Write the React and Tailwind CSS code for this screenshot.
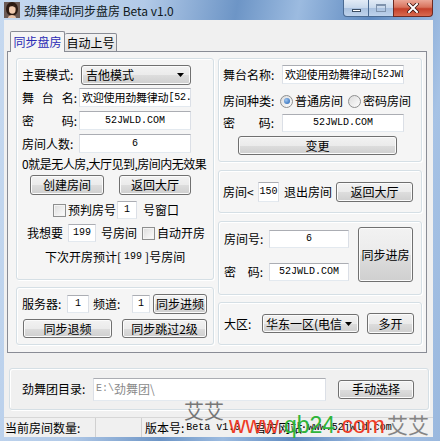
import React from "react";

const Btn = ({ className = "", children }) => (
  <div
    className={`flex shrink-0 items-center justify-center rounded-[3px] border border-[#707070] bg-[linear-gradient(to_bottom,#f2f2f2_0%,#ebebeb_50%,#dddddd_51%,#cfcfcf_100%)] shadow-[inset_0_0_0_1px_#fbfbfb] text-[#000] ${className}`}
  >
    {children}
  </div>
);

const Inp = ({ className = "", children }) => (
  <div
    className={`flex shrink-0 items-center overflow-hidden whitespace-nowrap border border-[#abadb3] border-x-[#dbdfe6] border-b-[#e3e9ef] bg-white ${className}`}
  >
    {children}
  </div>
);

const Mono = ({ children, className = "" }) => (
  <span className={`font-['Liberation_Mono',monospace] text-[10px] leading-none ${className}`}>{children}</span>
);

const Sel = ({ className = "", children }) => (
  <div
    className={`flex shrink-0 items-center rounded-[3px] border border-[#707070] bg-[linear-gradient(to_bottom,#f2f2f2_0%,#ebebeb_50%,#dddddd_51%,#cfcfcf_100%)] pr-[6px] shadow-[inset_0_0_0_1px_#fbfbfb] ${className}`}
  >
    <div className="min-w-0 flex-1 whitespace-nowrap text-left">{children}</div>
    <svg width="7" height="4" viewBox="0 0 7 4" className="shrink-0">
      <path d="M0 0H7L3.5 4Z" fill="#000" />
    </svg>
  </div>
);

const Check = ({ className = "" }) => (
  <div
    className={`h-[13px] w-[13px] shrink-0 border border-[#8e8f8f] bg-[linear-gradient(135deg,#dcdcdc,#fdfdfd)] shadow-[inset_0_0_0_1px_#f4f4f4] ${className}`}
  />
);

const Radio = ({ checked, className = "" }) => (
  <div
    className={`flex h-[13px] w-[13px] shrink-0 items-center justify-center rounded-full border border-[#8e8f8f] bg-[linear-gradient(135deg,#dcdcdc,#fdfdfd)] ${className}`}
  >
    {checked && (
      <div className="h-[6px] w-[6px] rounded-full bg-[radial-gradient(circle_at_35%_35%,#9cc4f0,#1f5fb0)]" />
    )}
  </div>
);

const Group = ({ className = "", children }) => (
  <div className={`shrink-0 rounded-[3px] border border-[#d5dfe5] shadow-[1px_1px_0_#fff,inset_1px_1px_0_#fff] ${className}`}>
    {children}
  </div>
);

export default function App() {
  return (
    <div className="relative flex h-[441px] w-[440px] flex-col overflow-hidden bg-[linear-gradient(100deg,#c6d9f0_0%,#b2cae8_28%,#6d95c6_46%,#9cbbe0_58%,#5f8ac0_72%,#a6c2e5_88%,#9ab8de_100%)] font-['Noto_Sans_CJK_SC',sans-serif] text-[12px] leading-none text-black">
      {/* Title bar */}
      <div className="relative flex h-[20px] shrink-0 items-start">
        <div className="ml-[4px] mt-[2px] h-[16px] w-[16px] shrink-0">
          <svg width="16" height="16" viewBox="0 0 16 16">
            <rect x="0" y="0" width="16" height="16" fill="#6b5a55" />
            <ellipse cx="8" cy="7" rx="6" ry="7" fill="#2c1a12" />
            <ellipse cx="8.3" cy="7.5" rx="3.3" ry="4.3" fill="#f1cbb0" />
            <path d="M4 16C4 12 12 12 12 16Z" fill="#e9c1a6" />
            <path d="M5 5C6 2 11 2 11.5 6C10 4 7 4 5 5Z" fill="#2c1a12" />
          </svg>
        </div>
        <div className="ml-[4px] mt-[5px] whitespace-nowrap text-[12px] text-[#101820]">劲舞律动同步盘房 Beta v1.0</div>
        <div className="ml-auto mr-[7px] flex h-[17px] items-stretch">
          <div className="flex w-[26px] items-center justify-center rounded-bl-[4px] border border-t-0 border-[#4a6a92] bg-[linear-gradient(to_bottom,#e2ebf6_0%,#c7d8ec_50%,#a9c1df_51%,#bfd3ec_100%)]">
            <div className="mt-[5px] h-[3px] w-[9px] border border-[#3b4d63] bg-white" />
          </div>
          <div className="flex w-[24px] items-center justify-center border-y border-t-0 border-[#4a6a92] bg-[linear-gradient(to_bottom,#e2ebf6_0%,#c7d8ec_50%,#a9c1df_51%,#bfd3ec_100%)]">
            <div className="h-[8px] w-[10px] border border-[#7f93ad] border-t-2" />
          </div>
          <div className="flex w-[40px] items-center justify-center rounded-br-[4px] border border-t-0 border-[#6e2a22] bg-[linear-gradient(to_bottom,#eba797_0%,#d8735d_45%,#c4402a_55%,#d96a4f_100%)]">
            <svg width="12" height="10" viewBox="0 0 12 10">
              <path d="M2 1L10 9M10 1L2 9" stroke="#3a1410" strokeWidth="3.6" strokeLinecap="square" />
              <path d="M2 1L10 9M10 1L2 9" stroke="#fff" strokeWidth="2" strokeLinecap="square" />
            </svg>
          </div>
        </div>
      </div>

      {/* Body */}
      <div className="flex h-[417px] shrink-0">
        <div className="w-[4px] shrink-0" />
        <div className="flex w-[429px] shrink-0 flex-col bg-[#f0f0f0]">
          {/* Tabs */}
          <div className="relative z-10 -mb-px mt-[11px] flex h-[21px] items-end pl-[6px]">
            <div className="flex h-[21px] w-[55px] items-center justify-center rounded-t-[2px] border border-b-0 border-[#898c95] bg-[#f5f5f5] pb-[1px] text-[#2b2bb4]">
              同步盘房
            </div>
            <div className="flex h-[19px] w-[52px] items-center justify-center rounded-t-[2px] border border-l-0 border-[#898c95] bg-[linear-gradient(to_bottom,#f2f2f2,#e3e3e3)]">
              自动上号
            </div>
          </div>

          {/* Tab panel */}
          <div className="ml-[3px] flex h-[302px] w-[420px] shrink-0 gap-[4px] border border-[#898c95] bg-[#f5f5f5] pl-[8px] pt-[6px]">
            {/* Left column */}
            <div className="flex w-[198px] shrink-0 flex-col">
              <Group className="flex h-[222px] flex-col pl-[5px]">
                <div className="mt-[6px] flex h-[20px] items-center">
                  <span className="w-[59px]">主要模式:</span>
                  <Sel className="h-[20px] w-[110px] pl-[4px]">吉他模式</Sel>
                </div>
                <div className="mt-[3px] flex h-[19px] items-center">
                  <span className="flex w-[57px] justify-between pr-[2px]"><span>舞</span><span>台</span><span>名:</span></span>
                  <Inp className="h-[19px] w-[112px] pl-[2px] text-[11px] tracking-[-0.2px]">欢迎使用劲舞律动<Mono>[52.</Mono></Inp>
                </div>
                <div className="mt-[4px] flex h-[19px] items-center">
                  <span className="flex w-[57px] justify-between pr-[2px]"><span>密</span><span>码:</span></span>
                  <Inp className="h-[19px] w-[112px] justify-center"><Mono>52JWLD.COM</Mono></Inp>
                </div>
                <div className="mt-[4px] flex h-[19px] items-center">
                  <span className="w-[57px]">房间人数:</span>
                  <Inp className="h-[19px] w-[112px] justify-center"><Mono>6</Mono></Inp>
                </div>
                <div className="mt-[4px] flex h-[14px] items-center whitespace-nowrap tracking-[-0.5px]">0就是无人房,大厅见到,房间内无效果</div>
                <div className="mt-[4px] flex h-[20px] items-center">
                  <Btn className="ml-[8px] h-[20px] w-[74px]">创建房间</Btn>
                  <Btn className="ml-[15px] h-[20px] w-[72px]">返回大厅</Btn>
                </div>
                <div className="mt-[6px] flex h-[18px] items-center">
                  <Check className="ml-[31px]" />
                  <span className="ml-[2px]">预判房号</span>
                  <Inp className="ml-[1px] h-[18px] w-[20px] justify-center"><Mono>1</Mono></Inp>
                  <span className="ml-[6px]">号窗口</span>
                </div>
                <div className="mt-[5px] flex h-[18px] items-center">
                  <span className="ml-[5px]">我想要</span>
                  <Inp className="ml-[5px] h-[18px] w-[28px] justify-center"><Mono>199</Mono></Inp>
                  <span className="ml-[5px]">号房间</span>
                  <Check className="ml-[5px]" />
                  <span className="ml-[2px]">自动开房</span>
                </div>
                <div className="ml-[23px] mt-[8px] flex h-[14px] items-center whitespace-nowrap">
                  下次开房预计[ <Mono className="mx-[3px]">199</Mono> ]号房间
                </div>
              </Group>
              <Group className="mt-[7px] flex h-[58px] flex-col pl-[5px]">
                <div className="mt-[6px] flex h-[20px] items-center">
                  <span className="w-[45px]">服务器:</span>
                  <Inp className="h-[18px] w-[22px] justify-center"><Mono>1</Mono></Inp>
                  <span className="ml-[4px] w-[39px]">频道:</span>
                  <Inp className="h-[18px] w-[18px] justify-center"><Mono>1</Mono></Inp>
                  <Btn className="ml-[3px] h-[20px] w-[54px]">同步进频</Btn>
                </div>
                <div className="mt-[5px] flex h-[19px] items-center">
                  <Btn className="ml-[1px] h-[19px] w-[89px]">同步退频</Btn>
                  <Btn className="ml-[10px] h-[19px] w-[85px]">同步跳过2级</Btn>
                </div>
              </Group>
            </div>

            {/* Right column */}
            <div className="flex w-[204px] shrink-0 flex-col">
              <Group className="flex h-[104px] flex-col pl-[4px]">
                <div className="mt-[6px] flex h-[19px] items-center">
                  <span className="w-[59px]">舞台名称:</span>
                  <Inp className="h-[19px] w-[122px] pl-[2px] text-[11px] tracking-[-0.2px]">欢迎使用劲舞律动<Mono>[52JWL</Mono></Inp>
                </div>
                <div className="mt-[8px] flex h-[18px] items-center">
                  <span className="w-[57px]">房间种类:</span>
                  <Radio checked />
                  <span className="ml-[2px]">普通房间</span>
                  <Radio className="ml-[5px]" />
                  <span className="ml-[2px]">密码房间</span>
                </div>
                <div className="mt-[4px] flex h-[18px] items-center">
                  <span className="flex w-[59px] justify-between pr-[8px]"><span>密</span><span>码:</span></span>
                  <Inp className="h-[18px] w-[122px] justify-center"><Mono>52JWLD.COM</Mono></Inp>
                </div>
                <div className="mt-[4px] flex h-[19px] items-center">
                  <Btn className="ml-[15px] h-[19px] w-[159px]">变更</Btn>
                </div>
              </Group>
              <Group className="mt-[8px] flex h-[43px] items-center pl-[4px]">
                <span className="w-[35px]">房间&lt;</span>
                <Inp className="h-[20px] w-[21px] justify-center"><Mono>150</Mono></Inp>
                <span className="ml-[5px]">退出房间</span>
                <Btn className="ml-[4px] h-[20px] w-[77px]">返回大厅</Btn>
              </Group>
              <Group className="mt-[8px] flex h-[74px] items-start pl-[5px]">
                <div className="flex flex-col">
                  <div className="mt-[8px] flex h-[18px] items-center">
                    <span className="w-[45px]">房间号:</span>
                    <Inp className="h-[18px] w-[80px] justify-center"><Mono>6</Mono></Inp>
                  </div>
                  <div className="mt-[15px] flex h-[18px] items-center">
                    <span className="flex w-[45px] justify-between pr-[6px]"><span>密</span><span>码:</span></span>
                    <Inp className="h-[18px] w-[80px] justify-center"><Mono>52JWLD.COM</Mono></Inp>
                  </div>
                </div>
                <Btn className="ml-[9px] mt-[5px] h-[55px] w-[55px]">同步进房</Btn>
              </Group>
              <Group className="mt-[7px] flex h-[43px] items-center pl-[5px]">
                <span className="w-[38px]">大区:</span>
                <Sel className="h-[19px] w-[97px] pl-[3px]">华东一区(电信</Sel>
                <Btn className="ml-[8px] h-[21px] w-[47px]">多开</Btn>
              </Group>
            </div>
          </div>

          {/* Directory group */}
          <Group className="ml-[5px] mt-[15px] flex h-[42px] w-[420px] items-center pl-[12px]">
            <span className="w-[71px]">劲舞团目录:</span>
            <Inp className="h-[23px] w-[233px] pl-[2px] text-[#8a8a8a]"><Mono>E:\</Mono>劲舞团\</Inp>
            <Btn className="ml-[12px] h-[19px] w-[76px]">手动选择</Btn>
          </Group>

          {/* Status bar */}
          <div className="mt-[7px] flex h-[20px] shrink-0 items-center border-t border-[#d7d7d7] bg-[#f0f0f0]">
            <div className="flex h-full w-[92px] items-center border-r border-[#d0d0d0] pl-[1px]">当前房间数量:</div>
            <div className="h-full w-[46px] border-r border-[#d0d0d0]" />
            <div className="flex h-full items-center whitespace-nowrap pl-[3px]">
              版本号: <Mono className="ml-[2px]">Beta v1.0</Mono>
              <span className="ml-[14px]">官方网站:</span>
              <Mono className="ml-[2px]">www.52jwld.com</Mono>
            </div>
          </div>
        </div>
        <div className="w-[7px] shrink-0" />
      </div>

      {/* Watermark */}
      <div className="pointer-events-none absolute left-[184px] top-[401px] whitespace-nowrap text-[20px] leading-none text-[#5a5a5a] opacity-80">艾艾</div>
      <div className="pointer-events-none absolute left-[229px] top-[414px] flex items-baseline whitespace-nowrap font-['Liberation_Sans',sans-serif] text-[23px] leading-none">
        <span className="text-[#ee3b26]">www.</span>
        <span className="text-[#2fb43a]">qb24</span>
        <span className="text-[#ee3b26]">.com</span>
        <span className="ml-[2px] font-['Noto_Sans_CJK_SC',sans-serif] text-[21px] text-[#6a6a6a] opacity-80">艾艾</span>
      </div>
    </div>
  );
}
